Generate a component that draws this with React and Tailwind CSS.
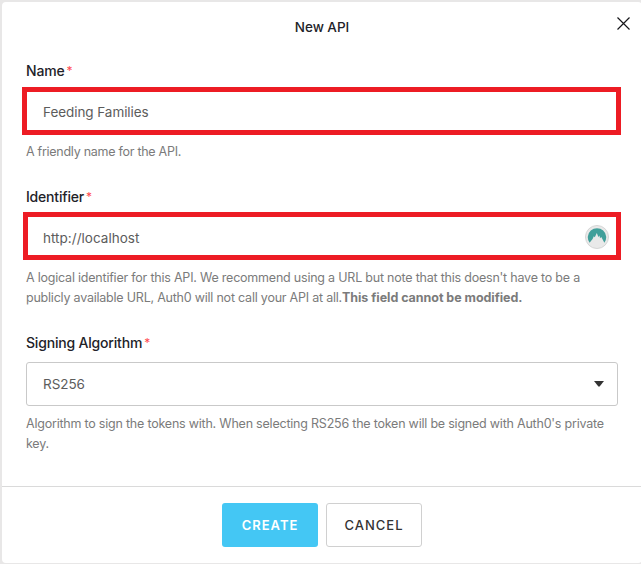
import React from "react";

function Label({ children }) {
  return (
    <label className="flex h-5 items-center text-[14px] font-medium leading-5 text-[#222228]">
      <span className="tracking-[-0.19px]">{children}</span>
      <span className="ml-[2px] text-[12px] font-normal text-[#ff4a50]">*</span>
    </label>
  );
}

function NordIcon() {
  return (
    <svg className="mt-[2px] size-6" viewBox="0 0 24 24">
      <circle cx="12" cy="12" r="11.5" fill="#e9e9e9" stroke="#d6d6d6" />
      <path
        d="M4.6 17.8A9.2 9.2 0 1 1 19.4 17.8L16.3 12 15 13.2 14.5 10.6 13.4 12 11.8 8 9.8 12.2 8.8 11.2 7.6 14Z"
        fill="#419f9a"
      />
    </svg>
  );
}

export default function App() {
  return (
    <div className="h-[564px] w-[641px] overflow-hidden bg-[#e8e7e7] pl-[2px] pt-[2px] font-['Inter','Liberation_Sans',sans-serif]">
      <div className="flex h-[561px] w-[640px] flex-col rounded-[4px] bg-white">
        <header className="flex h-[59px] items-start justify-between pr-[12px]">
          <span className="w-[25px]" />
          <h1 className="mt-[15px] text-[13.5px] font-medium leading-5 tracking-[-0.05px] text-[#222228]">New API</h1>
          <button className="mt-[15px]" aria-label="Close">
            <svg className="size-[13px]" viewBox="0 0 13 13" fill="none" stroke="#16161a" strokeWidth="1.2">
              <path d="M.5.5l12 12M12.5.5l-12 12" />
            </svg>
          </button>
        </header>

        <main className="h-[425px] px-6 text-[12.5px] leading-5 tracking-[-0.215px] text-[#7b7b7b]">
          <Label>Name</Label>
          <div className="-ml-1 mt-[6px] flex h-12 w-[599px] items-center border-[5px] border-[#ed1c24] px-4 pt-[2px] text-[13.5px] tracking-[-0.06px] text-[#5c5c5c]">
            Feeding Families
          </div>
          <p className="mt-[7px] whitespace-nowrap tracking-[-0.27px]">A friendly name for the API.</p>

          <div className="mt-[25px]">
            <Label>Identifier</Label>
          </div>
          <div className="-ml-[3px] mt-[5px] flex h-12 w-[598px] items-center justify-between border-[5px] border-[#ed1c24] pl-[15px] pr-[7px] text-[13.5px] text-[#5c5c5c]">
            <span className="pt-[3px] tracking-[0.02px]">http://localhost</span>
            <NordIcon />
          </div>
          <p className="mt-[8px] whitespace-nowrap">
            <span>A logical identifier for this API. We recommend using a URL but note that this doesn't have to be a</span>
            <br />
            <span className="tracking-[-0.22px]">publicly available URL, Auth0 will not call your API at all.</span>
            <b className="font-bold tracking-[-0.04px]">This field cannot be modified.</b>
          </p>

          <div className="mt-[25px]">
            <Label>Signing Algorithm</Label>
          </div>
          <div className="mt-[9px] flex h-11 w-[592px] items-center justify-between rounded-[3px] border border-[#c9c9c9] pl-4 pr-[13px] text-[13.5px] tracking-[-0.06px] text-[#5c5c5c]">
            <span>RS256</span>
            <svg className="h-[6px] w-[10px]" viewBox="0 0 10 6">
              <path d="M0 0H10L5.8 5.3Q5 6 4.2 5.3Z" fill="#333" />
            </svg>
          </div>
          <p className="mt-[8px] whitespace-nowrap">
            <span>Algorithm to sign the tokens with. When selecting RS256 the token will be signed with Auth0's private</span>
            <br />
            key.
          </p>
        </main>

        <footer className="flex h-[77px] justify-center gap-2 border-t border-[#dadada] pt-4 text-[13px] tracking-[1px]">
          <button className="h-11 w-24 rounded-[3px] bg-[#44c7f4] pt-[2px] font-semibold text-white">CREATE</button>
          <button className="h-11 w-24 rounded-[3px] border border-[#d0d0d0] pt-[2px] font-medium text-[#333]">CANCEL</button>
        </footer>
      </div>
    </div>
  );
}
